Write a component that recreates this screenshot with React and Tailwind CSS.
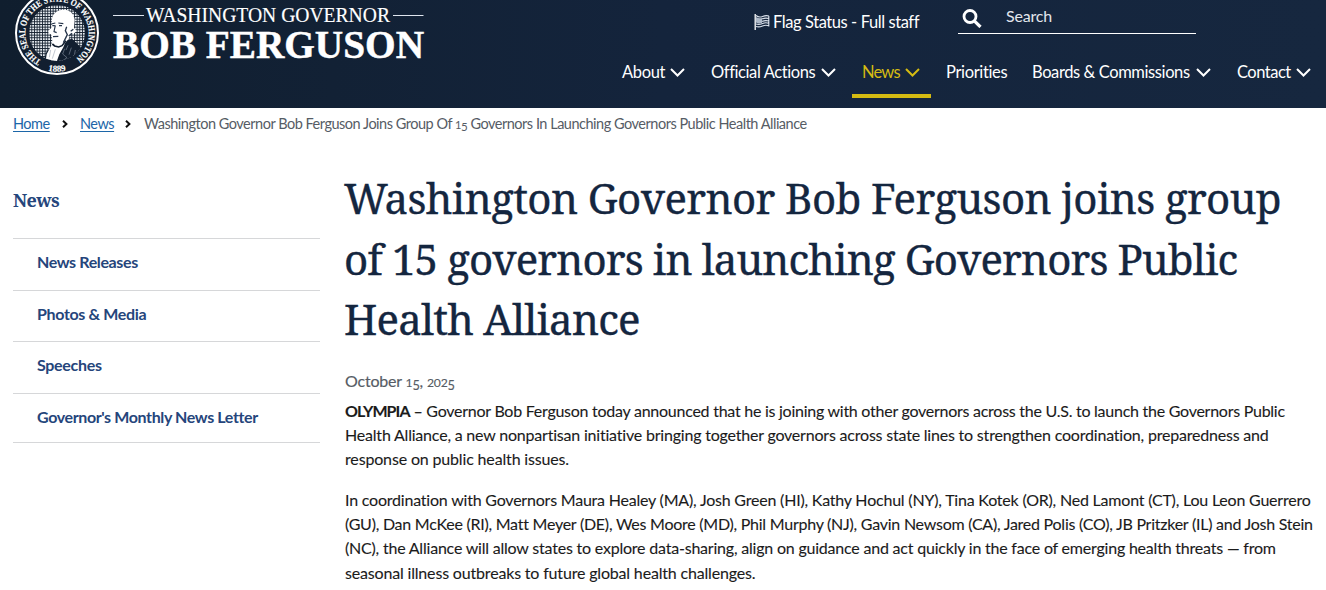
import React from "react";

const navItems = [
  { label: "About", menu: true, className: "w-[84px] tracking-[-0.35px]" },
  { label: "Official Actions", menu: true, className: "w-[146px] tracking-[-0.4px]" },
  { label: "News", menu: true, active: true, className: "w-[79px] tracking-[-0.8px]" },
  { label: "Priorities", className: "w-[81px] tracking-[-0.35px]" },
  { label: "Boards & Commissions", menu: true, className: "w-[200px] tracking-[-0.4px]" },
  { label: "Contact", menu: true, className: "w-[95px] tracking-[-0.5px]" },
];

const sideLinks = [
  { label: "News Releases", className: "h-[52px] tracking-[-0.38px]" },
  { label: "Photos & Media", className: "h-[51px] tracking-[-0.35px]" },
  { label: "Speeches", className: "h-[52px] tracking-[-0.3px]" },
  { label: "Governor's Monthly News Letter", className: "h-[49px] tracking-[-0.38px]" },
];

const Seal = () => (
  <svg className="h-[78px] w-[94px] shrink-0 overflow-visible" viewBox="0 0 282 234">
    <defs>
      <pattern id="grid" width="8" height="8" patternUnits="userSpaceOnUse">
        <rect width="8" height="8" fill="#e6ebf0" />
        <path d="M0 0H8M0 0V8" stroke="#14202f" strokeWidth="5" />
      </pattern>
      <clipPath id="inner">
        <circle cx="141" cy="99" r="84" />
      </clipPath>
      <path id="ring" d="M94 182A95 95 0 1 1 188 182" />
      <path id="year" d="M86 201A116 116 0 0 0 196 201" />
    </defs>
    <circle cx="141" cy="99" r="123" fill="#121f30" stroke="#fff" strokeWidth="6" />
    <circle cx="141" cy="99" r="84" fill="url(#grid)" />
    <g clipPath="url(#inner)">
      <path d="M98 200L108 158 128 133 186 116 212 142 226 170 200 200Z" fill="#121f30" />
      <path d="M105 196L110 163 124 136 129 112 172 112 160 142 148 163 136 196Z" fill="#fff" />
      <path
        d="M126 56C129 36 147 28 163 29C181 30 193 44 194 60L192 83L200 93L190 102L183 99L176 116L163 132L148 138L133 135L127 120L124 104L115 98L117 90L124 84Z"
        fill="#fff"
      />
      <path d="M124 72L136 69M145 69L160 71M127 77H134M147 77H156M136 76L132 95 140 98M129 110L145 109" stroke="#26354a" strokeWidth="3.500" fill="none" />
      <path d="M170 80L166 92 172 104 160 128M190 88L182 94M186 100L176 108" stroke="#26354a" strokeWidth="4" fill="none" />
      <path d="M127 132L134 138 146 141 156 137 168 122" stroke="#121f30" strokeWidth="5" fill="none" />
      <path d="M164 146L158 162 171 173 151 187M184 143L177 164M196 150L192 172M174 136L168 150" stroke="#7d8998" strokeWidth="2" fill="none" />
      <path d="M136 148L127 176M122 150L118 172" stroke="#a5aeba" strokeWidth="2" fill="none" />
    </g>
    <g fill="#fff" stroke="#fff" strokeWidth="0.500" className="font-['Liberation_Serif',serif] font-bold">
      <text fontSize="28">
        <textPath href="#ring" textLength="486" lengthAdjust="spacingAndGlyphs">THE SEAL OF THE STATE OF WASHINGTON</textPath>
      </text>
      <text fontSize="27" textAnchor="middle">
        <textPath href="#year" startOffset="50%">1889</textPath>
      </text>
    </g>
  </svg>
);

const Wordmark = () => (
  <svg className="ml-[9px] h-[72px] w-[316px] shrink-0 overflow-visible" viewBox="0 0 316 72" fill="#fff">
    <path d="M0 15.500H31M280 15.500H310.500" stroke="#dfe5ee" />
    <g className="font-['Liberation_Serif',serif]" stroke="#fff">
      <text x="33" y="22" fontSize="20.500" strokeWidth="0.150" textLength="244" lengthAdjust="spacingAndGlyphs">WASHINGTON GOVERNOR</text>
      <text x="0" y="58" fontSize="41" fontWeight="700" strokeWidth="0.500" textLength="311" lengthAdjust="spacingAndGlyphs">BOB FERGUSON</text>
    </g>
  </svg>
);

const Chevron = () => (
  <svg className="h-[9px] w-[15px]" viewBox="0 0 15 9" fill="none" stroke="currentColor" strokeWidth="2">
    <path d="M1 1L7.500 7.500L14 1" />
  </svg>
);

const FlagIcon = () => (
  <svg className="mr-[3px] h-[17px] w-[16px]" viewBox="0 0 16 17" fill="none" stroke="#dbe2ec">
    <path d="M1.200 0V16" stroke="#fff" strokeWidth="1.300" />
    <path d="M2 1.500Q5 4 8.500 2.500T15 2M8 5Q11 3.500 15 4.500M8 7.500Q11 6 15 7M2 10Q5 11 8.500 9.500T15 9.500M2 12.500Q5 13.500 8.500 12T15 12M14.800 2V12.500" strokeWidth="1.100" />
    <path d="M2 3Q5 5 8 4V9Q5 10 2 8.500Z" fill="#aeb9c8" stroke="none" />
  </svg>
);

const Separator = () => (
  <svg className="h-[8px] w-[6px]" viewBox="0 0 6 8" fill="none" stroke="#111" strokeWidth="2">
    <path d="M1 .8L4.400 4L1 7.200" />
  </svg>
);

// Text figures: 0-2 sit at x-height, 5 hangs below the baseline
const OldStyle = ({ children }) =>
  children.split("").map((c, i) => (
    <span
      key={i}
      className={c === "5" ? "align-[-0.2em] text-[0.8em] leading-none" : /[0-2]/.test(c) ? "text-[0.76em] leading-none" : ""}
    >
      {c}
    </span>
  ));

const Header = () => (
  <header className="flex h-[108px] justify-between bg-linear-to-r from-[#101e2e] via-[#14243c] via-50% to-[#16273f] text-white">
    <div className="flex pl-[10px]">
      <Seal />
      <Wordmark />
    </div>
    <div className="flex flex-col pr-1">
      <div className="flex h-[44px] items-start pl-[142px]">
        <a className="mt-[10px] flex w-[204px] items-center text-[16.5px] leading-6 tracking-[-0.42px] whitespace-nowrap">
          <FlagIcon />
          Flag Status - Full staff
        </a>
        <div className="flex h-[34px] w-[238px] items-start border-b border-white pl-1">
          <svg className="mt-[9px] h-[19px] w-[20px]" viewBox="0 0 20 19" fill="none" stroke="#fff">
            <circle cx="8" cy="7.500" r="6" strokeWidth="2.800" />
            <path d="M12.300 11.800L18.500 18" strokeWidth="3.200" />
          </svg>
          <span className="mt-[4px] ml-[24px] text-[16px] leading-6 tracking-[-0.2px] text-[#e3e7ed]">Search</span>
        </div>
      </div>
      <nav className="flex justify-end gap-[5px]">
        {navItems.map(({ label, menu, active, className }) => (
          <a
            key={label}
            className={`flex h-[54px] items-center justify-between border-b-4 pt-1.5 pr-[11px] pl-[10px] text-[16.5px] leading-6 whitespace-nowrap ${
              active ? "border-[#d5bb12] text-[#d5bb12]" : "border-transparent"
            } ${className}`}
          >
            <span>{label}</span>
            {menu && <Chevron />}
          </a>
        ))}
      </nav>
    </div>
  </header>
);

const Breadcrumb = () => (
  <div className="flex h-[32px] items-center pl-[13px] text-[14.5px] tracking-[-0.484px] whitespace-nowrap text-[#565c65]">
    <a className="w-[49px] text-[#1c66a8] underline underline-offset-2">Home</a>
    <Separator />
    <a className="ml-[12px] w-[45px] text-[#1c66a8] underline underline-offset-2">News</a>
    <Separator />
    <span className="ml-[13px] leading-5">
      Washington Governor Bob Ferguson Joins Group Of <OldStyle>15</OldStyle> Governors In Launching Governors Public Health Alliance
    </span>
  </div>
);

const Sidebar = () => (
  <aside className="w-[307px] text-[#25457b]">
    <h2 className="h-[98px] pt-[46px] font-['Noto_Serif','DejaVu_Serif',serif] text-[18px] leading-7 font-bold tracking-[-0.6px]">
      News
    </h2>
    <ul className="border-t border-[#d6d7d9]">
      {sideLinks.map(({ label, className }) => (
        <li key={label} className={`border-b border-[#d6d7d9] pt-[11px] pl-6 text-[16px] leading-6 font-bold ${className}`}>
          {label}
        </li>
      ))}
    </ul>
  </aside>
);

const Article = () => (
  <article className="ml-[25px] flex-1 whitespace-nowrap text-[#1b1b1b]">
    <h1 className="-ml-px mt-[28px] font-['Noto_Serif','DejaVu_Serif',serif] text-[42px] leading-[60.5px] text-[#14263f] [-webkit-text-stroke:0.35px_#14263f]">
      <span className="block tracking-[-0.61px]">Washington Governor Bob Ferguson joins group</span>
      <span className="block tracking-[-0.88px]">of 15 governors in launching Governors Public</span>
      <span className="block tracking-[-0.8px]">Health Alliance</span>
    </h1>
    <p className="mt-[19px] text-[16px] leading-6 tracking-[-0.2px] text-[#565c65] [-webkit-text-stroke:0.15px_#565c65]">
      October <OldStyle>15, 2025</OldStyle>
    </p>
    <div className="mt-[6px] text-[16px] leading-[24.25px] [-webkit-text-stroke:0.1px_#1b1b1b]">
      <p>
        <span className="block tracking-[-0.257px]">
          <strong className="tracking-[-0.9px]">OLYMPIA</strong> – Governor Bob Ferguson today announced that he is joining with other governors across the U.S. to launch the Governors Public
        </span>
        <span className="block tracking-[-0.2px]">
          Health Alliance, a new nonpartisan initiative bringing together governors across state lines to strengthen coordination, preparedness and
        </span>
        <span className="block tracking-[-0.159px]">response on public health issues.</span>
      </p>
      <p className="mt-[16.5px]">
        <span className="block tracking-[-0.207px]">
          In coordination with Governors Maura Healey (MA), Josh Green (HI), Kathy Hochul (NY), Tina Kotek (OR), Ned Lamont (CT), Lou Leon Guerrero
        </span>
        <span className="block tracking-[-0.25px]">
          (GU), Dan McKee (RI), Matt Meyer (DE), Wes Moore (MD), Phil Murphy (NJ), Gavin Newsom (CA), Jared Polis (CO), JB Pritzker (IL) and Josh Stein
        </span>
        <span className="block tracking-[-0.207px]">
          (NC), the Alliance will allow states to explore data-sharing, align on guidance and act quickly in the face of emerging health threats — from
        </span>
        <span className="block tracking-[-0.175px]">seasonal illness outbreaks to future global health challenges.</span>
      </p>
    </div>
  </article>
);

export default function App() {
  return (
    <div className="h-[590px] w-[1326px] overflow-hidden bg-white font-['Lato',sans-serif]">
      <Header />
      <Breadcrumb />
      <main className="flex pl-[13px]">
        <Sidebar />
        <Article />
      </main>
    </div>
  );
}
